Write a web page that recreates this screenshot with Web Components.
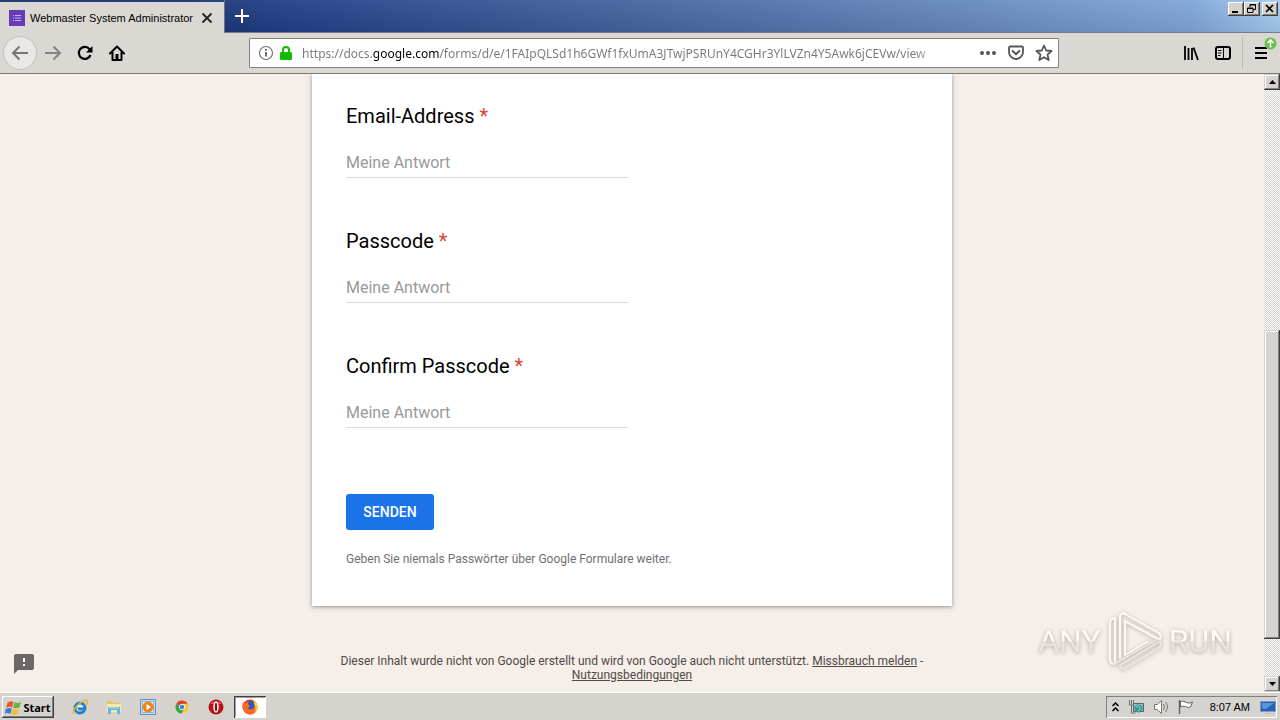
<!DOCTYPE html>
<html lang="de">
<head>
<meta charset="utf-8">
<title>Webmaster System Administrator</title>
<style>
html, body { margin: 0; height: 100%; overflow: hidden; }
body {
    font-family: Roboto, "Liberation Sans", sans-serif;
    --ui-font: "Noto Sans", "DejaVu Sans", sans-serif;
    --face: #d6d3ce;
    --bar: #dbd8d3;
    --page: #f6eee9;
}
</style>
</head>
<body>
<desktop-screen>
    <browser-window>
        <tab-strip slot="tabs">Webmaster System Administrator</tab-strip>
        <nav-toolbar slot="toolbar" url="https://docs.google.com/forms/d/e/1FAIpQLSd1h6GWf1fxUmA3JTwjPSRUnY4CGHr3YlLVZn4Y5Awk6jCEVw/view"></nav-toolbar>
        <form-page>
            <form-question>Email-Address</form-question>
            <form-question>Passcode</form-question>
            <form-question>Confirm Passcode</form-question>
        </form-page>
        <scroll-bar slot="scroll"></scroll-bar>
    </browser-window>
    <task-bar slot="taskbar"></task-bar>
    <play-mark slot="mark"></play-mark>
</desktop-screen>

<script>
"use strict";

class BaseElement extends HTMLElement {
    constructor() {
        super();
        const t = document.createElement('template');
        t.innerHTML = `<style>
        :host, * { box-sizing:border-box; }
        button { border:0; padding:0; margin:0; background:none; font:inherit; color:inherit; display:flex; align-items:center; justify-content:center; }
        svg { display:block; flex:none; }
        </style>` + this.markup();
        this.attachShadow({ mode: "open" }).append(t.content.cloneNode(true));
    }
    markup() { return ''; }
}

class DesktopScreen extends BaseElement {
    markup() {
        return `
        <style>
        :host { display:flex; flex-direction:column; height:100vh; position:relative; }
        </style>
        <slot></slot>
        <slot name="taskbar"></slot>
        <slot name="mark"></slot>`;
    }
}

class BrowserWindow extends BaseElement {
    markup() {
        return `
        <style>
        :host { display:flex; flex-direction:column; flex:1; min-height:0; }
        .view { display:flex; flex:1; min-height:0; }
        </style>
        <slot name="tabs"></slot>
        <slot name="toolbar"></slot>
        <div class="view"><slot></slot><slot name="scroll"></slot></div>`;
    }
}

class TabStrip extends BaseElement {
    markup() {
        return `
        <style>
        :host {
            display:flex; align-items:stretch; height:33px;
            background:linear-gradient(to bottom, rgba(255,255,255,.06), rgba(0,0,0,.08)), linear-gradient(to right, #1a3374 15%, #223f86 22%, #46649f 50%, #6788bd 75%, #7fa5d8 93%, #a6cbf2);
            font:11px "Liberation Sans", sans-serif;
        }
        .tab { display:flex; align-items:center; width:224px; margin-top:2px; padding:0 10px 0 9px; background:var(--bar); }
        .title { flex:1; margin-left:5px; white-space:nowrap; color:#000; }
        .new { width:34px; border-left:1px solid #6d7487; }
        .space { flex:1; border-bottom:1px solid #777c88; }
        .new { border-bottom:1px solid #777c88; }
        .controls { display:flex; align-items:flex-start; padding:2px 2px 0 0; border-bottom:1px solid #777c88; }
        .controls button { width:16px; height:14px; background:var(--face); box-shadow:inset -1px -1px #404040, inset 1px 1px #fff, inset -2px -2px #808080; }
        .controls button:last-child { margin-left:2px; }
        </style>
        <div class="tab">
            <svg width="16" height="16" viewBox="0 0 16 16"><rect width="16" height="16" fill="#673ab7"/><path d="M4 5.500h1M4 8h1M4 10.500h1M6 5.500h6M6 8h6M6 10.500h6" stroke="#c9b3ec"/></svg>
            <span class="title"><slot></slot></span>
            <button aria-label="Close tab"><svg width="14" height="14" viewBox="0 0 14 14"><path d="M2.500 2.500l9 9m0-9l-9 9" stroke="#222" stroke-width="1.800"/></svg></button>
        </div>
        <button class="new" aria-label="New tab"><svg width="14" height="14" viewBox="0 0 14 14"><path d="M7 0v14M0 7h14" stroke="#fff" stroke-width="2"/></svg></button>
        <div class="space"></div>
        <div class="controls">
            <button aria-label="Minimize"><svg width="14" height="12" viewBox="0 0 14 12"><path d="M3 9h6" stroke="#000" stroke-width="2"/></svg></button>
            <button aria-label="Restore"><svg width="14" height="12" viewBox="0 0 14 12"><path d="M5 4V1.500h5.500v5H8M5 2h6M2.500 5h5.500v4.500h-5.500zM2 5.500h6" fill="none" stroke="#000"/></svg></button>
            <button aria-label="Close"><svg width="14" height="12" viewBox="0 0 14 12"><path d="M3 2l7 7m0-7l-7 7" stroke="#000" stroke-width="1.700"/></svg></button>
        </div>`;
    }
}

class NavToolbar extends BaseElement {
    markup() {
        return `
        <style>
        :host { display:flex; align-items:center; height:41px; padding:0 1px 0 3px; background:var(--bar); border-bottom:1px solid #7d7a76; }
        button { width:32px; height:32px; }
        .back { width:34px; height:34px; border:1px solid #c2bfba; border-radius:50%; background:#eae8e4; }
        .spring { flex:117; }
        .end { flex:117; }
        .url { display:flex; align-items:center; flex:806; height:30px; padding:0 0 0 8px; border:1px solid #85827e; background:#fff; border-radius:1px; }
        .url button { width:28px; height:28px; }
        .url .info { width:16px; }
        .url .lock { width:14px; margin:0 9px 0 5px; }
        input {
            flex:1; min-width:0; height:28px; border:0; padding:0; outline:0; font:12px var(--ui-font); margin-right:30px;
            color:transparent; -webkit-text-fill-color:transparent;
            background:linear-gradient(to right, #777 71px, #000 71px 138px, #777 138px calc(100% - 30px), transparent) text;
        }
        .divider { width:1px; height:32px; margin-left:3px; background:#bebbb6; }
        .menu { position:relative; width:36px; }
        .badge { position:absolute; top:0; right:2px; }
        </style>
        <button class="back" aria-label="Back"><svg width="18" height="16" viewBox="0 0 18 16"><path d="M17 8H2M8.500 1.500L2 8l6.500 6.500" fill="none" stroke="#777570" stroke-width="2"/></svg></button>
        <button aria-label="Forward"><svg width="18" height="16" viewBox="0 0 18 16"><path d="M1 8h15M9.500 1.500L16 8l-6.500 6.500" fill="none" stroke="#868480" stroke-width="2"/></svg></button>
        <button aria-label="Reload"><svg width="16" height="16" viewBox="0 0 16 16"><path d="M12.800 4.500A6 6 0 1 0 13.500 10" fill="none" stroke="#000" stroke-width="2.200"/><path d="M15.500 1v6.500H9z"/></svg></button>
        <button aria-label="Home"><svg width="16" height="16" viewBox="0 0 16 16"><path d="M1 8.500L8 1.500l7 7M3.500 7.500V15h9V7.500" fill="none" stroke="#000" stroke-width="2" stroke-linejoin="round" stroke-linecap="round"/><path d="M6.500 9h3v6h-3z"/></svg></button>
        <span class="spring"></span>
        <div class="url">
            <button class="info" aria-label="Site information"><svg width="16" height="16" viewBox="0 0 16 16"><circle cx="8" cy="8" r="6.500" fill="none" stroke="#737373" stroke-width="1.200"/><path d="M8 7v4.500M8 4v1.700" stroke="#555" stroke-width="1.700"/></svg></button>
            <button class="lock" aria-label="Secure connection"><svg width="14" height="16" viewBox="0 0 14 16"><path d="M4 8V5a3 3 0 0 1 6 0v3" fill="none" stroke="#12bc00" stroke-width="2"/><rect x="1" y="7" width="12" height="8" rx="1.300" fill="#12bc00"/></svg></button>
            <input type="text" aria-label="Address" spellcheck="false">
            <button aria-label="Page actions"><svg width="18" height="6" viewBox="0 0 18 6"><g fill="#555"><circle cx="3" cy="3" r="2"/><circle cx="9" cy="3" r="2"/><circle cx="15" cy="3" r="2"/></g></svg></button>
            <button aria-label="Save to Pocket"><svg width="16" height="16" viewBox="0 0 16 16"><path d="M2 1.500h12a1 1 0 0 1 1 1V7a7 7 0 0 1-14 0V2.500a1 1 0 0 1 1-1z" fill="none" stroke="#555" stroke-width="1.800"/><path d="M4.700 6L8 9.200 11.300 6" fill="none" stroke="#555" stroke-width="2" stroke-linecap="round"/></svg></button>
            <button aria-label="Bookmark"><svg width="18" height="18" viewBox="0 0 18 18"><path d="M9 1.500l2.200 5 5.300.5-4 3.600 1.200 5.400L9 13.200 4.300 16l1.200-5.400-4-3.600 5.300-.5z" fill="none" stroke="#555" stroke-width="1.800" stroke-linejoin="round"/></svg></button>
        </div>
        <span class="end"></span>
        <button aria-label="Library"><svg width="16" height="16" viewBox="0 0 16 16"><path d="M2 1v14M5.500 3v12M9 3v12" stroke="#000" stroke-width="1.800"/><path d="M10.500 2.500L15 15" stroke="#000" stroke-width="1.800"/></svg></button>
        <button aria-label="Sidebar"><svg width="16" height="16" viewBox="0 0 16 16"><rect x="1" y="2" width="14" height="12" rx="2" fill="none" stroke="#000" stroke-width="2"/><path d="M8.500 2v12M3 5.500h3.500M3 8h3.500M3 10.500h2.500" stroke="#000"/></svg></button>
        <span class="divider"></span>
        <button class="menu" aria-label="Menu"><svg width="14" height="14" viewBox="0 0 14 14"><path d="M1 2h12M1 7h12M1 12h12" stroke="#000" stroke-width="2"/></svg>
            <svg class="badge" width="13" height="13" viewBox="0 0 13 13"><circle cx="6.500" cy="6.500" r="6" fill="#6abf50"/><path d="M6.500 10.500v-7M3.500 6l3-3 3 3" fill="none" stroke="#fff" stroke-width="1.600"/></svg></button>`;
    }
    connectedCallback() {
        this.shadowRoot.querySelector('input').value = this.getAttribute('url');
    }
}

class FormQuestion extends BaseElement {
    markup() {
        return `
        <style>
        :host { display:block; height:125px; }
        label { display:block; font-size:20px; line-height:28px; color:#000; }
        label span { color:#db4437; }
        input { display:block; width:282px; max-width:100%; height:28px; margin-top:20px; padding:0 0 2px; border:0; border-bottom:1px solid #dcdcdc; outline:0; background:none; font:16px Roboto, "Liberation Sans", sans-serif; }
        input::placeholder { color:#999; opacity:1; }
        </style>
        <label for="answer"><slot></slot> <span>*</span></label>
        <input id="answer" type="text" placeholder="Meine Antwort">`;
    }
}

class FormPage extends BaseElement {
    markup() {
        return `
        <style>
        :host { display:flex; flex-direction:column; align-items:center; flex:1; min-width:0; overflow:hidden; position:relative; background:var(--page); }
        form { width:640px; max-width:100%; padding:28px 34px 40px; background:#fff; box-shadow:0 1px 4px rgba(60,50,40,.5); }
        .send { width:88px; height:36px; margin-top:17px; border-radius:3px; background:#1a73e8; color:#fff; font-size:14px; font-weight:500; }
        p { margin:22px 0 0; font-size:12px; line-height:14px; color:#707070; }
        footer { width:640px; max-width:100%; margin-top:48px; padding:0 24px; text-align:center; font-size:12px; line-height:14px; color:#504a47; }
        footer a { color:inherit; }
        .report { position:absolute; left:14px; bottom:18px; }
        </style>
        <form>
            <slot></slot>
            <button type="button" class="send">SENDEN</button>
            <p>Geben Sie niemals Passwörter über Google Formulare weiter.</p>
        </form>
        <footer>Dieser Inhalt wurde nicht von Google erstellt und wird von Google auch nicht unterstützt. <a href="#">Missbrauch melden</a> - <a href="#">Nutzungsbedingungen</a></footer>
        <button class="report" aria-label="Problem melden"><svg width="20" height="20" viewBox="0 0 20 20"><path d="M2 0h16a2 2 0 0 1 2 2v12a2 2 0 0 1-2 2H4l-4 4V2a2 2 0 0 1 2-2z" fill="#6b6764"/><path d="M9 4h2v4H9zM9 10h2v2H9z" fill="#fff"/></svg></button>`;
    }
}

class ScrollBar extends BaseElement {
    markup() {
        return `
        <style>
        :host { display:flex; flex-direction:column; width:16px; flex:none; background:repeating-conic-gradient(#d6d3ce 0 25%, #fff 0 50%) 0 0/2px 2px; }
        button, .thumb { background:var(--face); box-shadow:inset -1px -1px #404040, inset 1px 1px #d6d3ce, inset -2px -2px #808080, inset 2px 2px #fff; }
        button { width:16px; height:16px; flex:none; }
        .before { flex:240; }
        .thumb { flex:309; }
        .after { flex:37; }
        </style>
        <button aria-label="Scroll up"><svg width="7" height="4" viewBox="0 0 7 4"><path d="M0 4l3.500-4L7 4z"/></svg></button>
        <span class="before"></span><span class="thumb"></span><span class="after"></span>
        <button aria-label="Scroll down"><svg width="7" height="4" viewBox="0 0 7 4"><path d="M0 0l3.500 4L7 0z"/></svg></button>`;
    }
}

class TaskBar extends BaseElement {
    markup() {
        return `
        <style>
        :host { display:flex; align-items:center; height:28px; padding:1px 3px 0 2px; background:var(--face); border-top:1px solid #fff; box-shadow:0 -1px #d6d3ce; font:11px var(--ui-font); color:#000; }
        .start { width:52px; height:22px; gap:1px; font-weight:bold; box-shadow:inset -1px -1px #404040, inset 1px 1px #fff, inset -2px -2px #808080; }
        .apps { display:flex; flex:1; gap:2px; margin-left:10px; }
        .apps button { width:32px; height:22px; }
        .apps .active { background:#fff; box-shadow:inset 1px 1px #404040, inset -1px -1px #fff, inset 2px 2px #a0a0a0; }
        .tray { display:flex; align-items:center; height:22px; padding:0 1px 0 5px; gap:8px; box-shadow:inset 1px 1px #808080, inset -1px -1px #fff; }
        time { margin:0 2px 0 8px; font-family:"Liberation Sans", sans-serif; }
        </style>
        <button class="start"><svg width="17" height="17" viewBox="0 0 17 17">
            <path d="M2.500 4Q5 1 8.500 3L7 8.500Q4 7 1 8.800z" fill="#e8562a"/><path d="M9.500 3.300Q12.500 5 16 3l-1.600 5.500Q11 10 8 8.700z" fill="#70b33b"/>
            <path d="M.8 10Q4 8 6.800 9.800L5.300 15Q2.500 13 0 14.700z" fill="#3d79cf"/><path d="M7.800 10Q11 11.500 14 9.800l-1.500 5Q9.500 17 6.400 15z" fill="#f5bd28"/></svg>Start</button>
        <div class="apps">
            <button aria-label="Internet Explorer"><svg width="17" height="16" viewBox="0 0 17 16"><circle cx="8" cy="9" r="5" fill="#d8effc" stroke="#247fc8" stroke-width="3"/><path d="M5 8.500h9v3H7z" fill="#247fc8"/><path d="M2 15C-1 12 8 2 14 1.200c3-.2 1 4-.5 5.300" fill="none" stroke="#e5b72d" stroke-width="1.500"/></svg></button>
            <button aria-label="Explorer"><svg width="16" height="16" viewBox="0 0 16 16"><path d="M1 2h5l1 2h7v9H1z" fill="#e3c866"/><path d="M1 5h14v8H1z" fill="#f7e9a1"/><path d="M2 15V8h12v7h-3v-4H5v4z" fill="#65b5e0"/><path d="M3 9h10" stroke="#bce2f6"/></svg></button>
            <button aria-label="Media Player"><svg width="16" height="16" viewBox="0 0 16 16"><path d="M.5.500h15v15H.500z" fill="#c2dbef" stroke="#5c93c4"/><path d="M2.500 2.500h11v11h-11z" fill="#e6f1fa" stroke="#8db5d8"/><circle cx="8" cy="8" r="5.500" fill="#ef8519"/><path d="M6.500 5l4.500 3-4.500 3z" fill="#fff"/></svg></button>
            <button aria-label="Chrome"><svg width="14" height="14" viewBox="0 0 14 14"><circle cx="7" cy="7" r="6.500" fill="#f7c92d"/><path d="M1.400 3.700A6.500 6.500 0 0 0 6.500 13.500L9 8.500 7 7z" fill="#35a34d"/><path d="M7 7L1.400 3.700A6.500 6.500 0 0 1 12.600 3.700H7z" fill="#df3e30"/><circle cx="7" cy="7" r="3" fill="#fff"/><circle cx="7" cy="7" r="2.300" fill="#3f7fe8"/></svg></button>
            <button aria-label="Opera"><svg width="16" height="16" viewBox="0 0 16 16"><circle cx="8" cy="8" r="7.500" fill="#b5141a"/><path d="M2 5a7 6 0 0 1 12 0z" fill="#d35659"/><ellipse cx="8" cy="8" rx="2.700" ry="5.500" fill="#fff"/><ellipse cx="8" cy="8" rx="1.200" ry="4.300" fill="#7d0d10"/></svg></button>
            <button class="active" aria-label="Firefox"><svg width="16" height="16" viewBox="0 0 16 16"><circle cx="8" cy="8" r="7.500" fill="#e9382f"/><circle cx="8.500" cy="7" r="5" fill="#205bbd"/><path d="M1 3l2 1.500Q6 2 7 3.500 5 5 7 6l1 1Q7 9 5.500 9q3 3 6 0Q14 6 11 1q5 3 4.500 8c-1 6-8 8-12 5Q-1 10 1 3z" fill="#fb6a22"/><path d="M11 1q5 3 4.500 8-.5 3-3 5 2-4 .5-7z" fill="#ffd338"/></svg></button>
        </div>
        <div class="tray">
            <svg width="9" height="12" viewBox="0 0 9 12"><path d="M1.500 5l3-3 3 3M1.500 10l3-3 3 3" fill="none" stroke="#000" stroke-width="1.500"/></svg>
            <svg width="17" height="16" viewBox="0 0 17 16"><path d="M5.500 4.500h10v8h-10z" fill="#a2bdc8" stroke="#4f6672"/><circle cx="10.500" cy="9.500" r="4" fill="#349b94"/><path d="M8 8q3-3 4 0t-2 4" fill="none" stroke="#9edcc7"/><path d="M1.500 1v5h4V1M3.500 6v8h4M3.500 1v4" fill="none" stroke="#66716c"/></svg>
            <svg width="17" height="16" viewBox="0 0 17 16"><path d="M1.500 5.500h3l4-4v13l-4-4h-3z" fill="#fff" stroke="#777"/><path d="M10.500 5q2 3 0 6M12.500 3q4 5 0 10" fill="none" stroke="#777"/></svg>
            <svg width="16" height="16" viewBox="0 0 16 16"><path d="M2.500 2.500q3-1 6 1 3 1.500 6-.5l-2 5q-2 1.500-5-.5-2-1-5 .5z" fill="#fff" stroke="#666"/><path d="M1.500 1v14" stroke="#666" stroke-width="1.500"/></svg>
            <time>8:07 AM</time>
            <svg width="16" height="15" viewBox="0 0 16 15"><path d="M.5 1.500h15v10H.500z" fill="#2861b5" stroke="#809abf"/><path d="M2 3h12L6 9q-3 0-4-1z" fill="#5795de"/><path d="M5 13.500h6" stroke="#b5c2d3"/></svg>
        </div>`;
    }
}

class PlayMark extends BaseElement {
    markup() {
        return `
        <style>
        :host {
            display:flex; align-items:center; gap:6px; position:absolute; right:48px; bottom:48px; pointer-events:none;
            font-size:32px; line-height:62px; color:#fcfaf8;
            filter:drop-shadow(0 1px 2px rgba(80,65,60,.6)); opacity:.7;
        }
        .word { background:linear-gradient(#fff 50%, #e4ddda 50%); background-clip:text; -webkit-text-fill-color:transparent; }
        </style>
        <span class="word">ANY</span>
        <svg width="56" height="62" viewBox="0 0 56 62"><g fill="none" stroke="#fff" stroke-width="2" stroke-linejoin="round" stroke-linecap="round">
            <path d="M8 8Q3 9 3 13v36q0 4 4 5"/><path d="M8 8v44"/><path d="M13 48V6q1-4 5-2l34 19q3 3 1 6l-4-1L18 11v34l22-13"/></g>
            <g fill="none" stroke="#e8e2df" stroke-width="2" stroke-linejoin="round" stroke-linecap="round"><path d="M7 54l44-25M13 55l40-24M13 55q1 5 5 3l34-20q3-3 1-7"/></g></svg>
        <span class="word">RUN</span>`;
    }
}

customElements.define("form-question", FormQuestion);
customElements.define("form-page", FormPage);
customElements.define("scroll-bar", ScrollBar);
customElements.define("tab-strip", TabStrip);
customElements.define("nav-toolbar", NavToolbar);
customElements.define("browser-window", BrowserWindow);
customElements.define("task-bar", TaskBar);
customElements.define("play-mark", PlayMark);
customElements.define("desktop-screen", DesktopScreen);
</script>
</body>
</html>
